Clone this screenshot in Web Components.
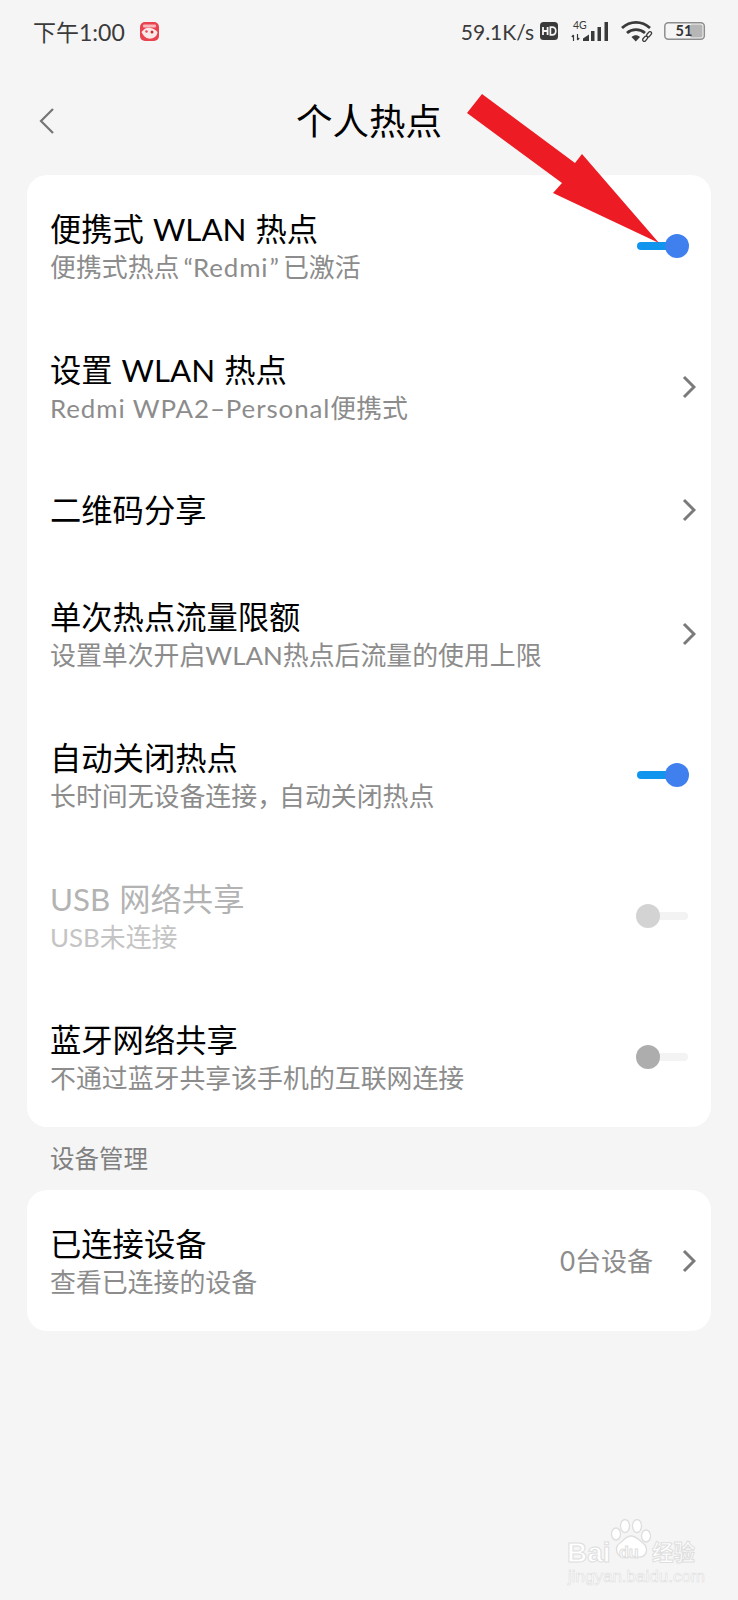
<!DOCTYPE html>
<html lang="zh"><head><meta charset="utf-8"><title>个人热点</title>
<style>
html,body{margin:0;padding:0;background:#f5f5f5}
body{width:738px;height:1600px;overflow:hidden;position:relative;font-family:"Lato","Noto Sans CJK SC",sans-serif}
</style></head><body>
<phone-screen>
  <status-bar></status-bar>
  <nav-bar title="个人热点"></nav-bar>
  <set-card>
    <set-row h="141" title="便携式 WLAN 热点" sub="便携式热点<q class=o>“</q><l>Redmi</l><q class=e>”</q>已激活"><tog-gle state="on"></tog-gle></set-row>
    <set-row h="141" title="设置 WLAN 热点" sub="<l>Redmi WPA2–Personal</l>便携式"><chev-ron></chev-ron></set-row>
    <set-row h="106" title="二维码分享"><chev-ron></chev-ron></set-row>
    <set-row h="141" title="单次热点流量限额" sub="设置单次开启WLAN热点后流量的使用上限"><chev-ron></chev-ron></set-row>
    <set-row h="141" title="自动关闭热点" sub="长时间无设备连接<c>，</c>自动关闭热点"><tog-gle state="on"></tog-gle></set-row>
    <set-row h="141" title="USB 网络共享" sub="USB未连接" disabled><tog-gle state="disabled"></tog-gle></set-row>
    <set-row h="141" title="蓝牙网络共享" sub="不通过蓝牙共享该手机的互联网连接"><tog-gle state="off"></tog-gle></set-row>
  </set-card>
  <section-label>设备管理</section-label>
  <set-card>
    <set-row h="141" title="已连接设备" sub="查看已连接的设备"><span slot="value">0台设备</span><chev-ron></chev-ron></set-row>
  </set-card>
  <red-arrow></red-arrow>
  <baidu-mark></baidu-mark>
</phone-screen>
<script>
const def=(name,html)=>customElements.define(name,class extends HTMLElement{
  connectedCallback(){ if(this.shadowRoot) return; const r=this.attachShadow({mode:'open'}); r.innerHTML=typeof html==='function'?html(this):html; }
});
def('phone-screen',`<style>:host{display:block;width:738px;height:1600px;background:#f5f5f5;color:#000}</style><slot></slot>`);
def('status-bar',`<style>
:host{display:flex;align-items:center;height:62px;padding:0 32px 0 33px;box-sizing:border-box;font-size:23px;color:#3a3a3a}
.sp{flex:1}
.app{margin-left:15px;display:block}
svg{display:block}
.net{font-size:21px}
</style>
<span class="t">下午1:00</span>
<svg class="app" width="19" height="19" viewBox="0 0 19 19"><rect width="19" height="19" rx="5" fill="#e8434e"/><path d="M1.500 10c3-4 6-5 9-4 3 .5 5 2 7 4-.5 4-3 6-6 6.500-3 .5-7 0-10-6.500z" fill="#fbe9e9"/><rect x="3" y="2.500" width="13" height="3" rx="1" fill="#f7b9bc"/><circle cx="12" cy="10" r="1.500" fill="#b33"/><circle cx="6.500" cy="9.500" r="1.200" fill="#e8434e"/></svg>
<span class="sp"></span>
<span class="net">59.1K/s</span>
<svg style="margin-left:6px" width="18" height="18" viewBox="0 0 18 18"><rect width="18" height="18" rx="3.500" fill="#3a3a3a"/><path d="M3 5v8M7.600 5v8M3 9h4.600" stroke="#f5f5f5" stroke-width="1.800" fill="none"/><path d="M10.400 5.100v7.800h1.700c2.500 0 3.700-1.500 3.700-3.900s-1.200-3.900-3.700-3.900z" stroke="#f5f5f5" stroke-width="1.700" fill="none"/></svg>
<svg style="margin-left:13px" width="40" height="22" viewBox="0 0 40 22"><g fill="#3a3a3a"><path d="M12 21v-2.500l6-4V21zM20 21V11h3.500v10zM26.500 21V7H30v14zM33.500 21V2H37v19z"/></g><g stroke="#3a3a3a" stroke-width="1.200" fill="none"><path d="M2.500 15v6M.8 17l1.700-2M6.500 14v6M8.200 18l-1.700 2"/></g><text x="2" y="9" font-size="10.500" font-family="Lato" fill="#3a3a3a" font-weight="400">4G</text></svg>
<svg style="margin-left:10px" width="33" height="22" viewBox="0 0 33 22"><g fill="none" stroke="#3a3a3a" stroke-width="2.800"><path d="M1 8C9 .500 21 .500 29 8"/><path d="M6 13C11 8.500 19 8.500 24 13"/></g><path d="M10.500 17c2.800-2.200 6-2.200 8.500 0l-4.200 4.500z" fill="#3a3a3a"/><g fill="#f5f5f5" stroke="#3a3a3a" stroke-width="1.300"><rect x="-2" y="-1.600" width="6" height="3.200" rx="1.600" transform="translate(23.500 19.500) rotate(-50)"/><rect x="-2" y="-1.600" width="6" height="3.200" rx="1.600" transform="translate(27.500 15) rotate(-50)"/></g></svg>
<svg style="margin-left:10px" width="42" height="18" viewBox="0 0 42 18"><rect x=".8" y=".8" width="39.500" height="16.400" rx="3.500" fill="#f5f5f5" stroke="#8e8e8e" stroke-width="1.500"/><rect x="26" y="2.500" width="12.500" height="13" rx="1.500" fill="#b6b6b6"/><text x="20" y="14" text-anchor="middle" font-size="14.500" font-weight="700" font-family="Lato" fill="#333">51</text></svg>`);
def('nav-bar',h=>`<style>
:host{display:block;height:113px}
.b{display:flex;align-items:center;justify-content:center;height:115px;font-size:36.500px;color:#000;position:relative}
svg{position:absolute;left:38px;top:45px}
</style><div class="b"><svg width="18" height="28" viewBox="0 0 18 28"><path d="M15 2 3 14l12 12" fill="none" stroke="#757575" stroke-width="2.200"/></svg><span>${h.getAttribute('title')}</span></div>`);
def('set-card',`<style>:host{display:block;margin:0 27px;background:#fff;border-radius:20px}</style><slot></slot>`);
def('set-row',h=>{const s=h.getAttribute('sub');const d=h.hasAttribute('disabled');
return `<style>
:host{display:flex;align-items:center;height:${h.getAttribute('h')}px;padding:0 15px 0 24px;box-sizing:border-box}
.txt{flex:1;min-width:0;${s?'padding-top:5px':''}}
.tt{font-size:31.300px;line-height:39px;color:${d?'#b3b3b3':'#000'};white-space:pre;word-spacing:1px;margin-left:-1px}
.st{font-size:25.900px;line-height:37px;color:${d?'#c4c4c4':'#8c8c8c'};white-space:pre;margin-left:-1px}
.st q{quotes:none}
.st q::before,.st q::after{content:none}
.st q.o{padding-left:4px}
.st q.e{padding:0 4px 0 1px}
.st l{letter-spacing:.9px}
.st c{letter-spacing:-4px}
.val{font-size:26px;color:#8c8c8c;margin-right:29px;padding-bottom:2px}
.r{display:flex;align-items:center}
</style><div class="txt"><div class="tt">${h.getAttribute('title')}</div>${s?`<div class="st">${s}</div>`:''}</div><div class="val"><slot name="value"></slot></div><div class="r"><slot></slot></div>`});
def('chev-ron',`<style>:host{display:block;width:14px;height:24px}svg{display:block}</style><svg width="14" height="24" viewBox="0 0 14 24"><path d="M2 2l10 10L2 22" fill="none" stroke="#7a7a7a" stroke-width="3"/></svg>`);
def('tog-gle',h=>{const st=h.getAttribute('state');const on=st==='on';const k=on?'#3f80ee':st==='off'?'#adadad':'#d3d3d3';const t=on?'#0f95ee':'#f3f3f3';return `<style>
:host{display:block;position:relative;width:53px;height:24px;margin-right:7px}
.t{position:absolute;left:1px;right:1px;top:8px;height:8px;border-radius:4px;background:${t}}
.k{position:absolute;top:0;${on?'right:0':'left:0'};width:24px;height:24px;border-radius:50%;background:${k}}
</style><div class="t"></div><div class="k"></div>`});
def('section-label',`<style>:host{display:flex;align-items:center;height:63px;padding:0 0 2px 50px;font-size:24.500px;color:#808080;box-sizing:border-box}</style><slot></slot>`);
def('red-arrow',`<style>:host{display:block;position:absolute;left:0;top:0;width:738px;height:300px;pointer-events:none}svg{display:block}</style><svg width="738" height="300" viewBox="0 0 738 300"><polygon points="482,94 467,113 562,183 553,193 659,243 582,154 575,163" fill="#ed1c24"/></svg>`);
def('baidu-mark',`<style>
:host{display:block;position:absolute;left:565px;top:1518px;width:173px;height:72px;color:#fff;pointer-events:none;font-family:"Liberation Sans",sans-serif}
.a{position:absolute;font-weight:700;-webkit-text-stroke:1px #dedede;line-height:1}
svg{position:absolute;left:44px;top:1px}
</style>
<svg width="44" height="42" viewBox="0 0 44 42"><g fill="#fff" stroke="#dedede" stroke-width="1.300"><ellipse cx="7" cy="15" rx="4.500" ry="6"/><ellipse cx="16" cy="7" rx="4.500" ry="6.500"/><ellipse cx="28" cy="7" rx="4.500" ry="6.500"/><ellipse cx="37" cy="17" rx="4.500" ry="6"/><path d="M22 17c-5 0-7 4-11 7-6 4-4 15 5 14 4-.5 9-.5 13 0 9 1 11-9 5-14-4-3-7-7-12-7z"/></g></svg>
<span class="a" style="left:2px;top:21px;font-size:28px">Bai</span>
<span class="a" style="left:54px;top:27px;font-size:16px">du</span>
<span class="a" style="left:87px;top:22px;font-size:21.500px;font-family:'Noto Sans CJK SC',sans-serif">经验</span>
<span class="a" style="left:3px;top:50px;font-size:17px;font-weight:400;-webkit-text-stroke:.6px #dedede">jingyan.baidu.com</span>`);
</script>
</body></html>
